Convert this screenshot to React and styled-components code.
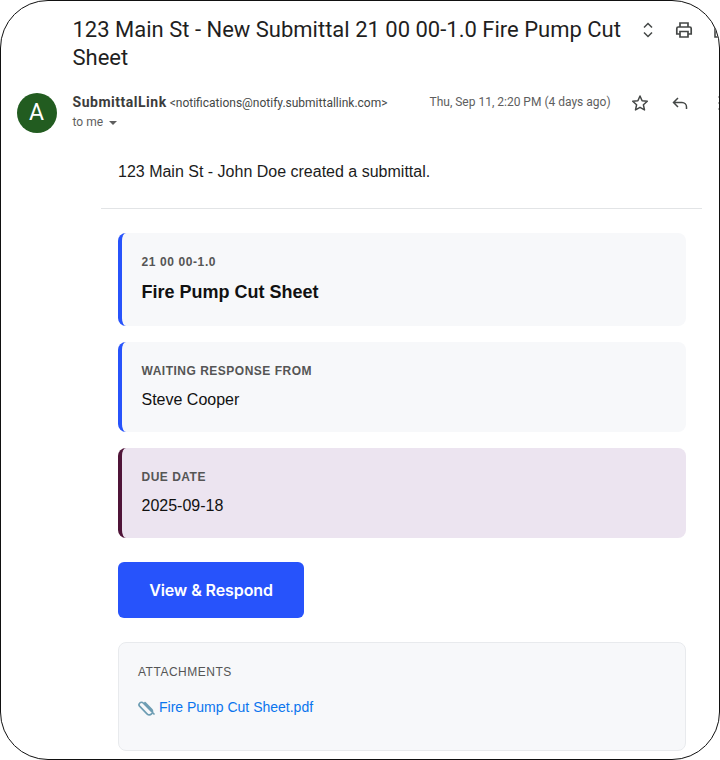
import React from "react";
import styled, { createGlobalStyle } from "styled-components";

const Global = createGlobalStyle`
  html, body { margin: 0; padding: 0; background: #fff; }
  * { box-sizing: border-box; }
`;

const Frame = styled.div`
  width: 720px;
  height: 760px;
  border: 1.5px solid #111;
  border-radius: 48px;
  overflow: hidden;
  background: #fff;
  font-family: "Liberation Sans", Arial, sans-serif;
  color: #111;
`;

const SubjectRow = styled.div`
  display: flex;
  align-items: flex-start;
  padding: 14.5px 0 0 71.5px;
  height: 78.5px;
`;

const Subject = styled.h1`
  margin: 0;
  width: 557px;
  flex: none;
  font: 400 22px/28px Roboto, sans-serif;
  color: #1f1f1f;
`;

const SubjectIcons = styled.div`
  display: flex;
  align-items: center;
  gap: 16px;
  margin: 4px 0 0 8px;
  flex: none;
  color: #444746;
`;

const SenderRow = styled.div`
  display: flex;
  padding-left: 15.5px;
  height: 53px;
`;

const Avatar = styled.div`
  width: 40px;
  height: 40px;
  border-radius: 50%;
  background: #225c20;
  color: #fff;
  font: 400 23px/40px Roboto, sans-serif;
  text-align: center;
  flex: none;
  margin-top: 13px;
`;

const SenderText = styled.div`
  margin-left: 16px;
  width: 357px;
  flex: none;
  padding-top: 14px;
  white-space: nowrap;
`;

const SenderLine = styled.div`
  font: 400 12px/16px Roboto, sans-serif;
  color: #444746;
`;

const SenderName = styled.span`
  font-weight: 700;
  font-size: 14px;
  letter-spacing: 0.52px;
  color: #3c3c3c;
`;

const ToLine = styled.div`
  display: flex;
  align-items: center;
  gap: 6px;
  margin-top: 3px;
  font: 400 12px/16px Roboto, sans-serif;
  color: #5e5e5e;
`;

const Caret = styled.span`
  width: 0;
  height: 0;
  border-left: 4px solid transparent;
  border-right: 4px solid transparent;
  border-top: 4px solid #5e5e5e;
  margin-top: 2px;
`;

const Meta = styled.div`
  display: flex;
  align-items: flex-start;
  padding-top: 13px;
  white-space: nowrap;
  color: #5e5e5e;
`;

const DateText = styled.span`
  font: 400 12px/18px Roboto, sans-serif;
  width: 200px;
`;

const MetaIcon = styled.span`
  display: flex;
  width: 40px;
  color: #444746;
`;

const Body = styled.div`
  padding-left: 100px;
  width: 701px;
`;

const Intro = styled.p`
  margin: 0;
  padding: 28px 0 0 17px;
  height: 76px;
  border-bottom: 1px solid #e2e4e6;
  font-size: 16px;
  line-height: 22px;
  color: #1c1c1c;
`;

const Cards = styled.div`
  width: 568px;
  margin-left: 17px;
  padding-top: 24px;
  display: flex;
  flex-direction: column;
  gap: 16px;
`;

const Card = styled.div`
  height: ${(p) => p.$h}px;
  padding: 21px 19.5px 0;
  background: ${(p) => (p.$due ? "#ece4f0" : "#f7f8fa")};
  border-left: 4px solid ${(p) => (p.$due ? "#4f1438" : "#2753fb")};
  border-radius: 8px;
`;

const Code = styled.div`
  font-size: 12px;
  line-height: 16px;
  font-weight: 700;
  letter-spacing: 0.6px;
  color: #555;
`;

const CardTitle = styled.div`
  margin-top: 10px;
  font-size: 18px;
  line-height: 24px;
  font-weight: 700;
  color: #111;
`;

const Label = styled.div`
  font-size: 12px;
  line-height: 16px;
  font-weight: 700;
  letter-spacing: 0.5px;
  color: #555;
`;

const Value = styled.div`
  margin-top: 11px;
  font-size: 16px;
  line-height: 20px;
  color: #111;
`;

const Action = styled.a`
  display: flex;
  align-items: center;
  justify-content: center;
  width: 186px;
  height: 56px;
  margin-top: 8px;
  background: #2753fb;
  border-radius: 6px;
  color: #fff;
  font: 600 16px/20px Inter, sans-serif;
  letter-spacing: -0.1px;
`;

const Attachments = styled.div`
  height: 109px;
  margin-top: 8px;
  padding: 21px 19px 0;
  background: #f7f8fa;
  border: 1px solid #e8eaed;
  border-radius: 8px;
`;

const AttachLabel = styled.div`
  font-size: 12px;
  line-height: 16px;
  letter-spacing: 0.5px;
  color: #555;
`;

const AttachLink = styled.a`
  display: flex;
  align-items: center;
  gap: 3px;
  margin-top: 17px;
  font-size: 14px;
  line-height: 20px;
  color: #0a75ee;
`;

const Sort = () => (
  <svg width="20" height="20" viewBox="0 0 20 20" fill="none" stroke="currentColor" strokeWidth="1.5">
    <path d="M6 7.5l4-4 4 4M6 12.5l4 4 4-4" />
  </svg>
);

const Printer = () => (
  <svg width="20" height="20" viewBox="0 0 20 20" fill="none" stroke="currentColor" strokeWidth="1.7">
    <path d="M6 7V3h8v4M6 14H2.8V8.5A1.5 1.5 0 0 1 4.3 7h11.4a1.5 1.5 0 0 1 1.5 1.5V14H14" />
    <path d="M6 11.5h8V17H6z" />
  </svg>
);

const Doc = () => (
  <svg width="20" height="20" viewBox="0 0 20 20" fill="none" stroke="currentColor" strokeWidth="1.6">
    <path d="M5 3h7l4 4v10H5z" />
  </svg>
);

const Star = () => (
  <svg width="20" height="20" viewBox="0 0 20 20" fill="none" stroke="currentColor" strokeWidth="1.5" strokeLinejoin="round">
    <path d="M10 3l2.1 4.8 5.2.5-3.9 3.5 1.1 5.1L10 14.3l-4.5 2.6 1.1-5.1-3.9-3.5 5.2-.5z" />
  </svg>
);

const Reply = () => (
  <svg width="20" height="20" viewBox="0 0 20 20" fill="none" stroke="currentColor" strokeWidth="1.5">
    <path d="M8 5L3.5 9.5 8 14M3.5 9.5H12a4.5 4.5 0 0 1 4.5 4.5v2" />
  </svg>
);

const Dots = () => (
  <svg width="20" height="20" viewBox="0 0 20 20" fill="currentColor">
    <circle cx="10" cy="4" r="1.5" />
    <circle cx="10" cy="10" r="1.5" />
    <circle cx="10" cy="16" r="1.5" />
  </svg>
);

const Clip = () => (
  <svg width="18" height="18" viewBox="0 0 18 18" fill="none" stroke="#6d9db3" strokeWidth="1.7" strokeLinecap="round">
    <path d="M16 16L5.2 5a2.4 2.4 0 0 0-3.4 3.4l7.2 7.4a3.2 3.2 0 0 0 4.6-4.5L7 4.6" />
  </svg>
);

export default function App() {
  return (
    <>
      <Global />
      <Frame>
        <SubjectRow>
          <Subject>123 Main St - New Submittal 21 00 00-1.0 Fire Pump Cut Sheet</Subject>
          <SubjectIcons>
            <Sort />
            <Printer />
            <Doc />
          </SubjectIcons>
        </SubjectRow>
        <SenderRow>
          <Avatar>A</Avatar>
          <SenderText>
            <SenderLine>
              <SenderName>SubmittalLink</SenderName> &lt;notifications@notify.submittallink.com&gt;
            </SenderLine>
            <ToLine>
              to me <Caret />
            </ToLine>
          </SenderText>
          <Meta>
            <DateText>Thu, Sep 11, 2:20 PM (4 days ago)</DateText>
            <MetaIcon><Star /></MetaIcon>
            <MetaIcon><Reply /></MetaIcon>
            <MetaIcon><Dots /></MetaIcon>
          </Meta>
        </SenderRow>
        <Body>
          <Intro>123 Main St - John Doe created a submittal.</Intro>
          <Cards>
            <Card $h={93}>
              <Code>21 00 00-1.0</Code>
              <CardTitle>Fire Pump Cut Sheet</CardTitle>
            </Card>
            <Card $h={90}>
              <Label>WAITING RESPONSE FROM</Label>
              <Value>Steve Cooper</Value>
            </Card>
            <Card $h={90} $due>
              <Label>DUE DATE</Label>
              <Value>2025-09-18</Value>
            </Card>
            <Action>View &amp; Respond</Action>
            <Attachments>
              <AttachLabel>ATTACHMENTS</AttachLabel>
              <AttachLink><Clip />Fire Pump Cut Sheet.pdf</AttachLink>
            </Attachments>
          </Cards>
        </Body>
      </Frame>
    </>
  );
}
